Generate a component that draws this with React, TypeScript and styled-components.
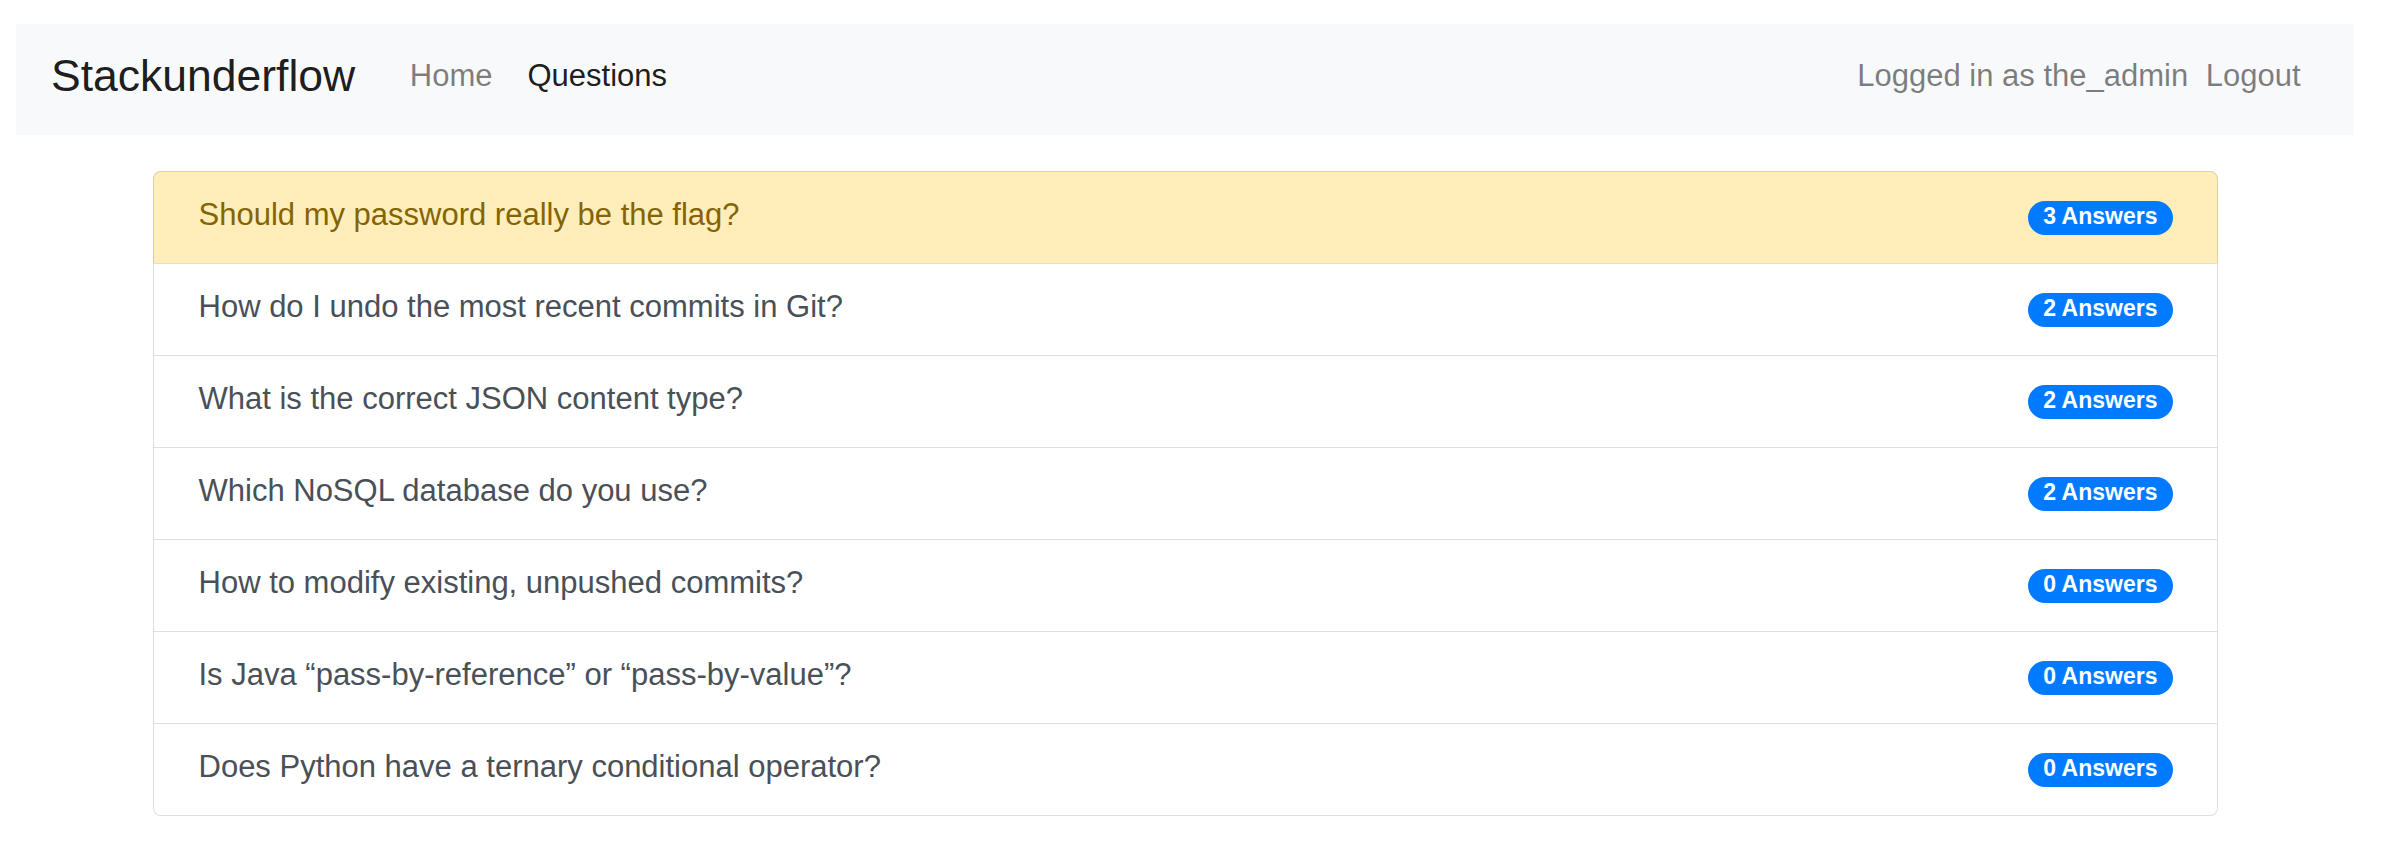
import React from "react";
import styled, { createGlobalStyle } from "styled-components";

const GlobalStyle = createGlobalStyle`
  html, body {
    margin: 0;
    padding: 0;
    background: #ffffff;
    font-family: "Liberation Sans", Arial, Helvetica, sans-serif;
    font-weight: 400;
    -webkit-font-smoothing: antialiased;
  }
  * { box-sizing: border-box; }
`;

const Page = styled.div`
  padding: 24px 38px 24px 16px;
`;

const Navbar = styled.nav`
  display: flex;
  align-items: center;
  height: 111px;
  padding: 0 36px 7px 35px;
  background: #f8f9fa;
`;

const Brand = styled.a`
  font-size: 44.5px;
  line-height: 1.5;
  color: rgba(0, 0, 0, 0.9);
  text-decoration: none;
  margin-right: 37px;
  white-space: nowrap;
`;

const NavGroup = styled.div`
  display: flex;
  align-items: center;
`;

const RightGroup = styled(NavGroup)`
  margin-left: auto;
`;

const NavLink = styled.a<{ $active?: boolean }>`
  font-size: 31px;
  line-height: 1.5;
  padding: 0 17.5px;
  text-decoration: none;
  white-space: nowrap;
  color: ${(p) => (p.$active ? "rgba(0, 0, 0, 0.9)" : "rgba(0, 0, 0, 0.5)")};
`;

const NavText = styled.span`
  font-size: 31px;
  line-height: 1.5;
  color: rgba(0, 0, 0, 0.5);
  white-space: nowrap;
`;

const List = styled.ul`
  list-style: none;
  padding: 0;
  width: 2065px;
  margin: 36px auto 0;
`;

const Row = styled.li<{ $warning?: boolean }>`
  display: flex;
  align-items: center;
  justify-content: space-between;
  height: 93px;
  padding: 0 44px 0 45px;
  margin-top: -1px;
  border: 1px solid rgba(0, 0, 0, 0.125);
  background: ${(p) => (p.$warning ? "#ffeeba" : "#ffffff")};
  color: ${(p) => (p.$warning ? "#856404" : "#495057")};

  &:first-child {
    margin-top: 0;
    border-top-left-radius: 8px;
    border-top-right-radius: 8px;
  }
  &:last-child {
    border-bottom-left-radius: 8px;
    border-bottom-right-radius: 8px;
  }
`;

const Title = styled.span`
  font-size: 31px;
  line-height: 37px;
  margin-bottom: 6px;
  white-space: nowrap;
`;

const Badge = styled.span`
  display: inline-block;
  font-size: 23px;
  font-weight: 700;
  line-height: 1;
  padding: 4px 15px 7px;
  border-radius: 999px;
  background: #007bff;
  color: #ffffff;
  white-space: nowrap;
`;

const questions = [
  { title: "Should my password really be the flag?", answers: 3, warning: true },
  { title: "How do I undo the most recent commits in Git?", answers: 2 },
  { title: "What is the correct JSON content type?", answers: 2 },
  { title: "Which NoSQL database do you use?", answers: 2 },
  { title: "How to modify existing, unpushed commits?", answers: 0 },
  { title: "Is Java \u201cpass-by-reference\u201d or \u201cpass-by-value\u201d?", answers: 0 },
  { title: "Does Python have a ternary conditional operator?", answers: 0 },
];

export default function App() {
  return (
    <>
      <GlobalStyle />
      <Page>
        <Navbar>
          <NavGroup>
            <Brand href="#">Stackunderflow</Brand>
            <NavLink href="#">Home</NavLink>
            <NavLink href="#" $active>
              Questions
            </NavLink>
          </NavGroup>
          <RightGroup>
            <NavText>Logged in as the_admin</NavText>
            <NavLink href="#">Logout</NavLink>
          </RightGroup>
        </Navbar>
        <List>
          {questions.map((q) => (
            <Row key={q.title} $warning={q.warning}>
              <Title>{q.title}</Title>
              <Badge>{q.answers} Answers</Badge>
            </Row>
          ))}
        </List>
      </Page>
    </>
  );
}
